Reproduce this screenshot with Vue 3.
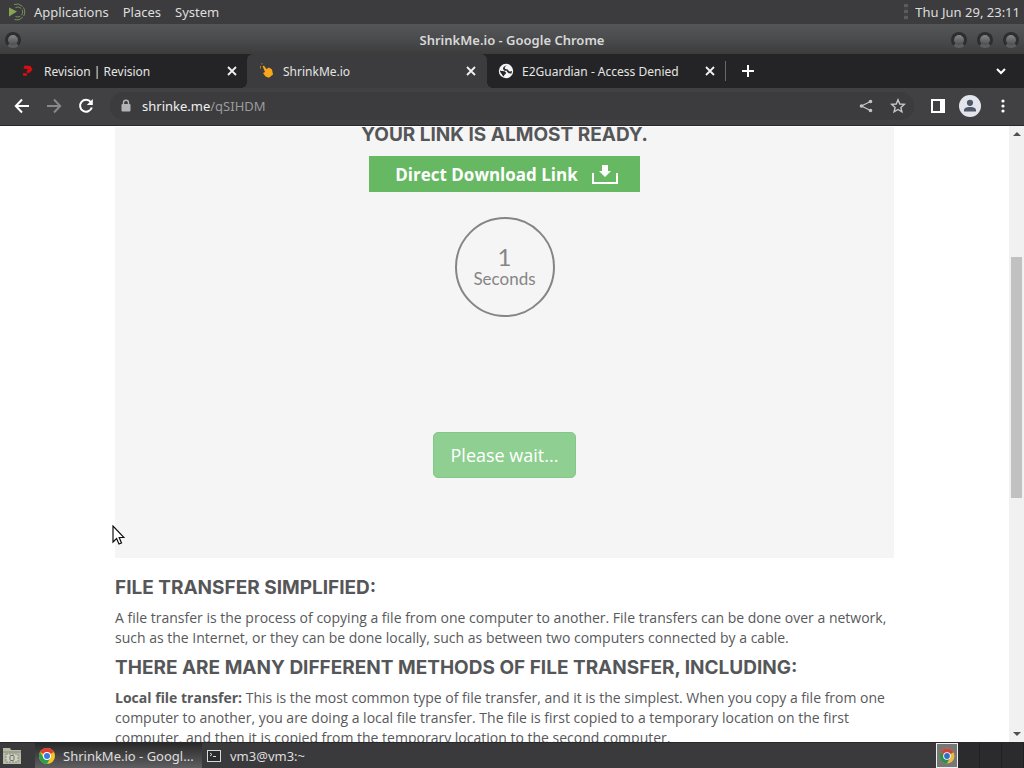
<script setup>
import { ref } from 'vue'

const menus = ['Applications', 'Places', 'System']
const address = ref('shrinke.me/qSIHDM')
const seconds = ref(1)
</script>

<template>
  <div class="desktop">
    <header class="panel">
      <svg class="mate" width="20" height="18" viewBox="0 0 20 18" fill="none" aria-hidden="true">
        <path d="M2 4.500 10 8.500 2 13.500z" fill="#87a556" />
        <path d="M7 1.500A8 8 0 1 1 7 16.500" stroke="#78905a" stroke-dasharray="9 1.500" />
        <path d="M8.500 4.500A5 5 0 1 1 8.500 13.500" stroke="#78905a" stroke-dasharray="6 1.500" />
      </svg>
      <nav class="menus">
        <button v-for="m in menus" :key="m" type="button">{{ m }}</button>
      </nav>
      <span class="grip"></span>
      <time class="clock">Thu Jun 29, 23:11</time>
    </header>

    <div class="titlebar">
      <button class="orb" type="button" aria-label="Window menu"></button>
      <h1>ShrinkMe.io - Google Chrome</h1>
      <div class="orbs">
        <button class="orb" type="button" aria-label="Minimize"></button>
        <button class="orb" type="button" aria-label="Maximize"></button>
        <button class="orb" type="button" aria-label="Close"></button>
      </div>
    </div>

    <div class="tabs">
      <div class="tab">
        <svg width="16" height="16" viewBox="0 0 16 16" aria-hidden="true">
          <path d="M4.500 2.500 10.500 3 12.500 6.500 9.500 10 6.500 9.500 6.800 8 8.500 6.500 3.500 5.500zM3 10 7.500 10.500 6.500 13 3 12.500z" fill="#d90d12" />
        </svg>
        <span>Revision | Revision</span>
        <button type="button" aria-label="Close tab"><svg width="10" height="10" viewBox="0 0 10 10"><path d="M1 1 9 9M9 1 1 9" stroke="#f2f2f2" stroke-width="1.800" /></svg></button>
      </div>
      <div class="tab active">
        <svg width="16" height="16" viewBox="0 0 16 16" aria-hidden="true">
          <path d="M3.500 3 5 2.800 7.500 6 10 4.500 13 6.500 14 11.500 10 14.800 6.500 13.500 4 10 6 9z" fill="#f9a61c" />
          <path d="M1.500 5.500 1.500 3M2 1 3.500 .8" stroke="#b5791c" />
        </svg>
        <span>ShrinkMe.io</span>
        <button type="button" aria-label="Close tab"><svg width="10" height="10" viewBox="0 0 10 10"><path d="M1 1 9 9M9 1 1 9" stroke="#f2f2f2" stroke-width="1.800" /></svg></button>
      </div>
      <div class="tab last">
        <svg width="16" height="16" viewBox="0 0 16 16" aria-hidden="true">
          <circle cx="8" cy="8" r="7.200" fill="#f4f4f4" />
          <path d="M9.500 2.500C8 3 6.500 3.500 6.800 5.200 7.500 6.800 9.500 5.500 10.200 7.200 11 8.800 13 8.500 14 8L13.500 10.500C11 11 9 9.500 8.800 7.800 7 8 5 7.500 5 5.500 5 4 7 2.300 9.500 2.500z" fill="#262628" />
          <path d="M1.800 7.500C4 8.500 8 7.500 8 10 8 11.500 6 11 6 13.500L4.500 12.500C4 10.500 2 10 1.800 7.500z" fill="#262628" />
        </svg>
        <span>E2Guardian - Access Denied</span>
        <button type="button" aria-label="Close tab"><svg width="10" height="10" viewBox="0 0 10 10"><path d="M1 1 9 9M9 1 1 9" stroke="#f2f2f2" stroke-width="1.800" /></svg></button>
      </div>
      <button class="newtab" type="button" aria-label="New tab"><svg width="12" height="12" viewBox="0 0 12 12"><path d="M6 0V12M0 6H12" stroke="#fff" stroke-width="2" /></svg></button>
      <button class="search" type="button" aria-label="Search tabs"><svg width="10" height="8" viewBox="0 0 10 8"><path d="M1 2 5 6 9 2" fill="none" stroke="#fff" stroke-width="2" /></svg></button>
    </div>

    <div class="toolbar">
      <button type="button" aria-label="Back"><svg width="16" height="16" viewBox="0 0 16 16" fill="none"><path d="M15 8H2M8 1.500 1.800 8 8 14.500" stroke="#fff" stroke-width="2" /></svg></button>
      <button type="button" aria-label="Forward"><svg width="16" height="16" viewBox="0 0 16 16" fill="none"><path d="M1 8H14M8 1.500 14.200 8 8 14.500" stroke="#88888a" stroke-width="2" /></svg></button>
      <button type="button" aria-label="Reload"><svg width="16" height="16" viewBox="0 0 16 16" fill="none"><path d="M12.800 4A6 6 0 1 0 13.800 9.500" stroke="#fff" stroke-width="2" /><path d="M14.800 1V7H8.800z" fill="#fff" /></svg></button>
      <div class="omnibox">
        <svg width="12" height="14" viewBox="0 0 12 14" aria-hidden="true"><path d="M3.500 5.500V3.800a2.500 2.500 0 0 1 5 0V5.500" fill="none" stroke="#b4b4b6" stroke-width="1.400" /><rect x="1.500" y="5" width="9" height="7.500" rx="1" fill="#b4b4b6" /></svg>
        <div class="url">
          <input v-model="address" aria-label="Address" />
          <span class="host" aria-hidden="true">shrinke.me</span>
        </div>
        <button type="button" aria-label="Share"><svg width="14" height="14" viewBox="0 0 14 14"><path d="M11.500 2.500 2.500 7 11.500 11.500" fill="none" stroke="#c4c4c6" stroke-width="1.300" /><g fill="#c4c4c6"><circle cx="11.500" cy="2.500" r="1.800" /><circle cx="2.500" cy="7" r="1.800" /><circle cx="11.500" cy="11.500" r="1.800" /></g></svg></button>
        <button type="button" aria-label="Bookmark"><svg width="16" height="16" viewBox="0 0 16 16"><path d="M8 1.800 9.800 6 14.300 6.400 10.900 9.400 11.900 13.800 8 11.500 4.100 13.800 5.100 9.400 1.700 6.400 6.200 6z" fill="none" stroke="#c8c8ca" stroke-width="1.400" /></svg></button>
      </div>
      <div class="actions">
        <button type="button" aria-label="Side panel"><svg width="14" height="14" viewBox="0 0 14 14"><path d="M0 0H14V14H0zM2 2V12H9V2z" fill="#fff" fill-rule="evenodd" /></svg></button>
        <button type="button" aria-label="Profile"><svg width="22" height="22" viewBox="0 0 22 22"><circle cx="11" cy="11" r="11" fill="#e2e5ec" /><circle cx="11" cy="7.800" r="3.100" fill="#51586a" /><path d="M5 16.500V15C5 12.500 9 12 11 12S17 12.500 17 15V16.500z" fill="#51586a" /></svg></button>
      </div>
      <button type="button" aria-label="More"><svg width="8" height="14" viewBox="0 0 8 14" fill="#fff"><circle cx="4" cy="2" r="1.600" /><circle cx="4" cy="7" r="1.600" /><circle cx="4" cy="12" r="1.600" /></svg></button>
    </div>

    <div class="view">
      <main class="page">
        <section class="ready">
          <h2>YOUR LINK IS ALMOST READY.</h2>
          <a class="direct" href="#download">
            <span>Direct Download Link</span>
            <svg width="26" height="20" viewBox="0 0 26 20" aria-hidden="true"><path d="M1 9V19H25V9" fill="none" stroke="#fff" stroke-width="2" /><path d="M10 1H16V7H19L13 13 7 7H10z" fill="#fff" /></svg>
          </a>
          <div class="timer"><strong>{{ seconds }}</strong><span>Seconds</span></div>
          <button class="wait" type="button">Please wait...</button>
        </section>
        <article>
          <h2>FILE TRANSFER SIMPLIFIED:</h2>
          <p>A file transfer is the process of copying a file from one computer to another. File transfers can be done over a network,<br />such as the Internet, or they can be done locally, such as between two computers connected by a cable.</p>
          <h2>THERE ARE MANY DIFFERENT METHODS OF FILE TRANSFER, INCLUDING:</h2>
          <p><b>Local file transfer:</b> This is the most common type of file transfer, and it is the simplest. When you copy a file from one<br />computer to another, you are doing a local file transfer. The file is first copied to a temporary location on the first<br />computer, and then it is copied from the temporary location to the second computer.</p>
        </article>
      </main>
      <div class="scrollbar">
        <button type="button" aria-label="Scroll up"><svg width="8" height="4" viewBox="0 0 8 4"><path d="M0 4 4 0 8 4z" fill="#505050" /></svg></button>
        <div class="track"><div class="thumb"></div></div>
        <button type="button" aria-label="Scroll down"><svg width="8" height="4" viewBox="0 0 8 4"><path d="M0 0H8L4 4z" fill="#505050" /></svg></button>
      </div>
    </div>

    <footer class="taskbar">
      <button class="files" type="button" aria-label="Show files"><svg width="20" height="18" viewBox="0 0 20 18"><path d="M1 3V1H8L9 3H19V17H1z" fill="#b5b9a6" /><path d="M1 5H19" stroke="#858977" /><rect x="4" y="7" width="12" height="8" fill="#cfd2c3" stroke="#888c7b" stroke-dasharray="2 1" /><rect x="8" y="8.500" width="4" height="5" rx="1" fill="none" stroke="#6b6f60" /></svg></button>
      <button class="task current" type="button">
        <svg width="16" height="16" viewBox="0 0 16 16" aria-hidden="true"><circle cx="8" cy="8" r="8" fill="#f8c522" /><path d="M8 8 1.070 4A8 8 0 0 1 14.930 4z" fill="#df4034" /><path d="M1.070 4A8 8 0 0 0 8 16L11.400 10 8 8 4.600 10z" fill="#2da04f" /><circle cx="8" cy="8" r="4" fill="#fff" /><circle cx="8" cy="8" r="3" fill="#3b78e0" /></svg>
        <span>ShrinkMe.io - Googl...</span>
      </button>
      <button class="task" type="button">
        <svg width="16" height="14" viewBox="0 0 16 14" aria-hidden="true"><rect x="1.500" y="1.500" width="13" height="11" fill="#292b2c" stroke="#d8d8d8" /><path d="M4 4 6 5.500 4 7M7 7.500H10" fill="none" stroke="#ddd" /></svg>
        <span>vm3@vm3:~</span>
      </button>
      <button class="tray" type="button" aria-label="Workspace"><svg width="16" height="16" viewBox="0 0 16 16"><circle cx="8" cy="8" r="7.500" fill="#e8bd3f" /><path d="M8 8 1.500 4.200A7.500 7.500 0 0 1 14.500 4.200z" fill="#cc453b" /><path d="M1.500 4.200A7.500 7.500 0 0 0 8 15.500L11 9.800z" fill="#348d50" /><circle cx="8" cy="8" r="3.800" fill="#fff" /><circle cx="8" cy="8" r="2.900" fill="#316bcb" /></svg></button>
      <div class="spaces"><span></span><span></span><span></span></div>
    </footer>

    <svg class="cursor" width="13" height="20" viewBox="0 0 13 20" aria-hidden="true"><path d="M1 1V17L4.600 13.600 7 19 9.500 18 7.200 12.500H12z" fill="#fff" stroke="#111" stroke-width="1.200" /></svg>
  </div>
</template>

<style>
html, body { margin: 0; background: #fff; }
</style>

<style scoped>
* { box-sizing: border-box; }
button { font: inherit; color: inherit; background: none; border: 0; padding: 0; margin: 0; display: flex; align-items: center; justify-content: center; }
h1, h2, p { margin: 0; }
svg { flex: none; display: block; }
.desktop { position: relative; height: 100vh; display: flex; flex-direction: column; overflow: hidden; font-family: "Noto Sans", sans-serif; font-size: 13px; color: #eee; }
.panel { flex: none; height: 24px; display: flex; align-items: center; padding: 0 4px 0 7px; background: #3c3c3e; color: #dedede; }
.menus { display: flex; gap: 14px; margin-left: 7px; }
.grip { width: 4px; height: 16px; margin-left: auto; margin-right: 7px; background: repeating-linear-gradient(#5b5b5e 0 3px, #414143 3px 6px); }
.titlebar { flex: none; height: 30px; display: grid; grid-template-columns: 80px 1fr 80px; align-items: center; padding: 2px 5px 0; background: linear-gradient(#555657, #4a4b4c 50%, #3c3c3d); }
.titlebar h1 { font-size: 13px; font-weight: 600; text-align: center; color: #d8d8d8; }
.orbs { display: flex; gap: 10px; justify-content: flex-end; }
.orb { width: 16px; height: 16px; border-radius: 50%; border: 3px solid #2d2e2f; border-bottom-color: #5c5d5e; background: linear-gradient(#858687, #4c4d4e); }
.tabs { flex: none; height: 34px; display: flex; align-items: stretch; background: #242426; font-size: 12px; }
.tab { flex: 0 1 240px; display: flex; align-items: center; gap: 8px; padding: 0 11px 0 11px; position: relative; color: #e4e4e4; }
.tab:first-child { flex-basis: 247px; padding-left: 20px; padding-right: 10px; }
.tab span { flex: 1; white-space: nowrap; }
.tab.active { background: #3c3c3e; border-radius: 6px 6px 0 0; padding-left: 12px; }
.tab.active::before, .tab.active::after { content: ""; position: absolute; bottom: 0; width: 6px; height: 6px; }
.tab.active::before { left: -6px; background: radial-gradient(circle at 0 0, transparent 6px, #3c3c3e 6px); }
.tab.active::after { right: -6px; background: radial-gradient(circle at 100% 0, transparent 6px, #3c3c3e 6px); }
.tab.last { flex-basis: 239px; }
.tab.last::after { content: ""; position: absolute; right: 0; top: 7px; height: 20px; width: 1px; background: #68686a; }
.newtab { width: 43px; }
.search { width: 46px; margin-left: auto; }
.toolbar { flex: none; height: 38px; display: flex; align-items: center; gap: 16px; padding: 0 17px 2px 14px; background: #414143; border-bottom: 1px solid #29292b; }
.omnibox { flex: 1; height: 28px; display: flex; align-items: center; gap: 17px; padding: 0 8px 0 10px; border-radius: 14px; background: #3c3c3e; }
.omnibox > svg { margin-right: -7px; }
.actions { display: flex; align-items: center; gap: 14px; padding-left: 1px; padding-right: 2px; }
.url { position: relative; flex: 1; }
.url input { display: block; width: 100%; padding: 0; border: 0; background: none; font: inherit; line-height: 20px; color: #9b9b9d; outline: 0; }
.host { position: absolute; left: 0; top: 0; line-height: 20px; color: #f0f0f0; background: #3c3c3e; pointer-events: none; }
.view { flex: 1; min-height: 0; display: flex; background: #fff; }
.page { flex: 1; overflow: hidden; padding: 1px 115px 0; color: #58595b; }
h2 { font-family: Inter, sans-serif; font-weight: 700; font-size: 19px; line-height: 20px; white-space: nowrap; color: #555658; }
.ready { height: 431px; display: flex; flex-direction: column; align-items: center; background: #f5f5f5; }
.ready h2 { line-height: 16px; }
.direct { margin-top: 13px; width: 271px; height: 36px; display: flex; align-items: center; justify-content: center; gap: 14px; padding-left: 4px; background: #66b862; color: #fff; font: 700 17px "Open Sans", sans-serif; text-decoration: none; }
.timer { margin-top: 25px; width: 100px; height: 100px; flex: none; border: 2px solid #858585; border-radius: 50%; display: flex; flex-direction: column; align-items: center; justify-content: center; color: #858585; font: 400 17px/20px Lato, sans-serif; }
.timer strong { font-weight: 400; font-size: 24px; line-height: 24px; }
.wait { margin-top: 115px; width: 143px; height: 46px; border-radius: 5px; background: #90cf92; border: 1px solid #83c888; color: #fff; font: 400 18px "Open Sans", sans-serif; }
article { padding-top: 20px; }
article p { font: 400 14px/20px "Open Sans", sans-serif; white-space: nowrap; padding: 10px 0; }
.scrollbar { flex: none; width: 15px; background: #f1f1f1; display: flex; flex-direction: column; }
.scrollbar button { height: 16px; }
.track { flex: 1; display: grid; grid-template-rows: 115fr 241fr 228fr; justify-content: center; }
.thumb { grid-row: 2; width: 11px; background: #c1c1c1; }
.taskbar { flex: none; height: 26px; display: flex; align-items: stretch; background: #3a3a3c; border-top: 1px solid #29292b; color: #dedede; }
.files { width: 35px; padding-right: 11px; }
.task { width: 167px; justify-content: flex-start; gap: 8px; padding-left: 4px; white-space: nowrap; }
.task.current { background: linear-gradient(#29292a, #5f5f61); }
.tray { margin-left: auto; width: 22px; border: 1px solid #eee; background: #777; }
.spaces { display: flex; width: 66px; background: #2b2b2d; }
.spaces span { flex: 1; border-right: 1px solid #202022; }
.cursor { position: absolute; left: 112px; top: 525px; }
</style>
